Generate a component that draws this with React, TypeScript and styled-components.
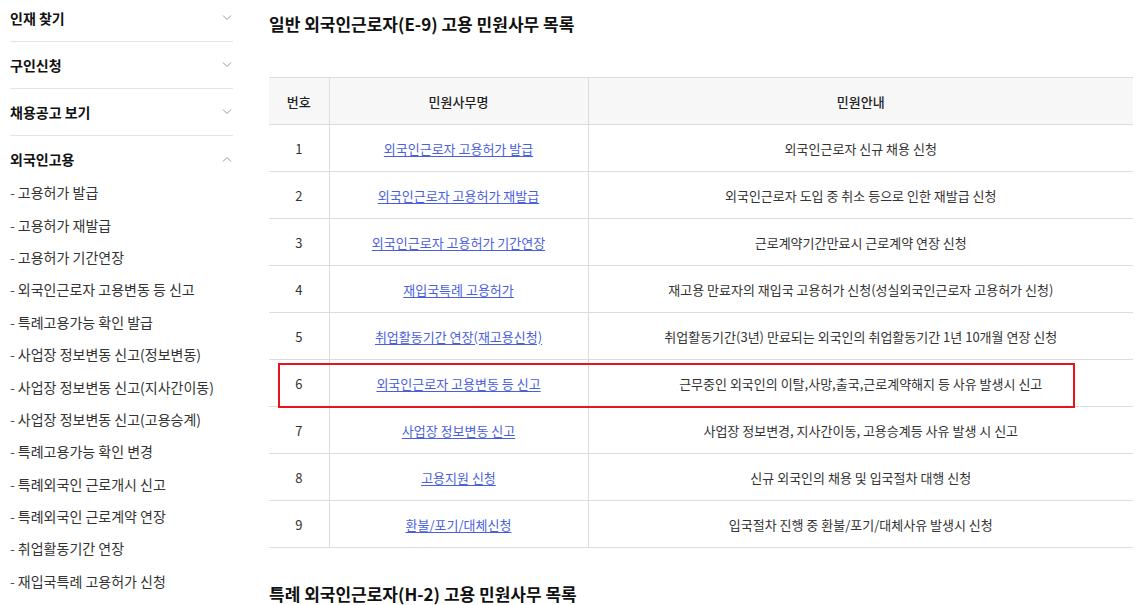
import React from "react";
import styled, { createGlobalStyle } from "styled-components";

const Global = createGlobalStyle`
  html, body { margin: 0; padding: 0; background: #fff; }
  body { font-family: "Noto Sans CJK KR", "Noto Sans", sans-serif; color: #222; overflow: hidden; }
  * { box-sizing: border-box; }
`;

const Page = styled.div`
  display: flex;
  align-items: flex-start;
  gap: 36px;
  padding: 0 9px 0 10px;
  width: 1142px;
  height: 605px;
  overflow: hidden;
`;

const Sidebar = styled.nav`
  width: 223px;
  flex: none;
  display: flex;
  flex-direction: column;
  margin-top: -5px;
`;

const Section = styled.div<{ $last?: boolean }>`
  border-bottom: ${(p) => (p.$last ? "none" : "1px solid #e4e4e4")};
`;

const SectionHead = styled.div`
  height: 46px;
  display: flex;
  align-items: center;
  justify-content: space-between;
  font-size: 14px;
  font-weight: 700;
  color: #111;
`;

const SubList = styled.ul`
  list-style: none;
  margin: -6px 0 0 0;
  padding: 0;
`;

const SubItem = styled.li`
  height: 32.4px;
  display: flex;
  align-items: center;
  font-size: 14px;
  color: #333;
  &::before {
    content: "-";
    margin-right: 3px;
    color: #555;
  }
`;

const Main = styled.main`
  flex: 1;
  display: flex;
  flex-direction: column;
`;

const Title = styled.h2<{ $top: number; $bottom: number }>`
  margin: ${(p) => p.$top}px 0 ${(p) => p.$bottom}px;
  font-size: 17px;
  font-weight: 700;
  color: #111;
  line-height: 24px;
`;

const Table = styled.table`
  width: 864px;
  border-collapse: collapse;
  font-size: 13px;
  color: #333;
  border-top: 1px solid #dcdcdc;
`;

const Th = styled.th<{ $w?: number }>`
  width: ${(p) => (p.$w ? `${p.$w}px` : "auto")};
  height: 47px;
  background: #f7f7f7;
  font-weight: 500;
  color: #222;
  text-align: center;
  border-bottom: 1px solid #dcdcdc;
  border-left: 1px solid #dcdcdc;
  &:first-child { border-left: none; }
`;

const Td = styled.td`
  height: 47px;
  text-align: center;
  border-bottom: 1px solid #dcdcdc;
  border-left: 1px solid #dcdcdc;
  &:first-child { border-left: none; }
`;

const Row = styled.tr``;

const Link = styled.a`
  color: #4a5fe0;
  text-decoration: underline;
  text-underline-offset: 2px;
  cursor: pointer;
`;

const Mark = styled.div`
  position: absolute;
  left: -855px;
  top: 3px;
  width: 797px;
  height: 45px;
  border: 2px solid #e8141c;
  pointer-events: none;
`;

const MarkCell = styled.td`
  position: relative;
  padding: 0;
  width: 0;
  border: none;
`;

const Chevron = ({ up }: { up?: boolean }) => (
  <svg width="10" height="6" viewBox="0 0 10 6" style={{ marginRight: 1 }}>
    <path
      d={up ? "M1 5.5 L5 1.5 L9 5.5" : "M1 0.5 L5 4.5 L9 0.5"}
      fill="none"
      stroke="#999"
      strokeWidth="1"
    />
  </svg>
);

const sections = ["인재 찾기", "구인신청", "채용공고 보기"];
const subs = [
  "고용허가 발급",
  "고용허가 재발급",
  "고용허가 기간연장",
  "외국인근로자 고용변동 등 신고",
  "특례고용가능 확인 발급",
  "사업장 정보변동 신고(정보변동)",
  "사업장 정보변동 신고(지사간이동)",
  "사업장 정보변동 신고(고용승계)",
  "특례고용가능 확인 변경",
  "특례외국인 근로개시 신고",
  "특례외국인 근로계약 연장",
  "취업활동기간 연장",
  "재입국특례 고용허가 신청",
];

const rows = [
  ["외국인근로자 고용허가 발급", "외국인근로자 신규 채용 신청"],
  ["외국인근로자 고용허가 재발급", "외국인근로자 도입 중 취소 등으로 인한 재발급 신청"],
  ["외국인근로자 고용허가 기간연장", "근로계약기간만료시 근로계약 연장 신청"],
  ["재입국특례 고용허가", "재고용 만료자의 재입국 고용허가 신청(성실외국인근로자 고용허가 신청)"],
  ["취업활동기간 연장(재고용신청)", "취업활동기간(3년) 만료되는 외국인의 취업활동기간 1년 10개월 연장 신청"],
  ["외국인근로자 고용변동 등 신고", "근무중인 외국인의 이탈,사망,출국,근로계약해지 등 사유 발생시 신고"],
  ["사업장 정보변동 신고", "사업장 정보변경, 지사간이동, 고용승계등 사유 발생 시 신고"],
  ["고용지원 신청", "신규 외국인의 채용 및 입국절차 대행 신청"],
  ["환불/포기/대체신청", "입국절차 진행 중 환불/포기/대체사유 발생시 신청"],
];

export default function App() {
  return (
    <>
      <Global />
      <Page>
        <Sidebar>
          {sections.map((s) => (
            <Section key={s}>
              <SectionHead>
                <span>{s}</span>
                <Chevron />
              </SectionHead>
            </Section>
          ))}
          <Section $last>
            <SectionHead>
              <span>외국인고용</span>
              <Chevron up />
            </SectionHead>
            <SubList>
              {subs.map((s) => (
                <SubItem key={s}>{s}</SubItem>
              ))}
            </SubList>
          </Section>
        </Sidebar>
        <Main>
          <Title $top={12} $bottom={41}>일반 외국인근로자(E-9) 고용 민원사무 목록</Title>
          <Table>
            <thead>
              <tr>
                <Th $w={60}>번호</Th>
                <Th $w={259}>민원사무명</Th>
                <Th>민원안내</Th>
              </tr>
            </thead>
            <tbody>
              {rows.map(([name, desc], i) => (
                <Row key={name}>
                  <Td>{i + 1}</Td>
                  <Td>
                    <Link>{name}</Link>
                  </Td>
                  <Td>{desc}</Td>
                  {i === 5 && (
                    <MarkCell>
                      <Mark />
                    </MarkCell>
                  )}
                </Row>
              ))}
            </tbody>
          </Table>
          <Title $top={34} $bottom={0}>특례 외국인근로자(H-2) 고용 민원사무 목록</Title>
        </Main>
      </Page>
    </>
  );
}
